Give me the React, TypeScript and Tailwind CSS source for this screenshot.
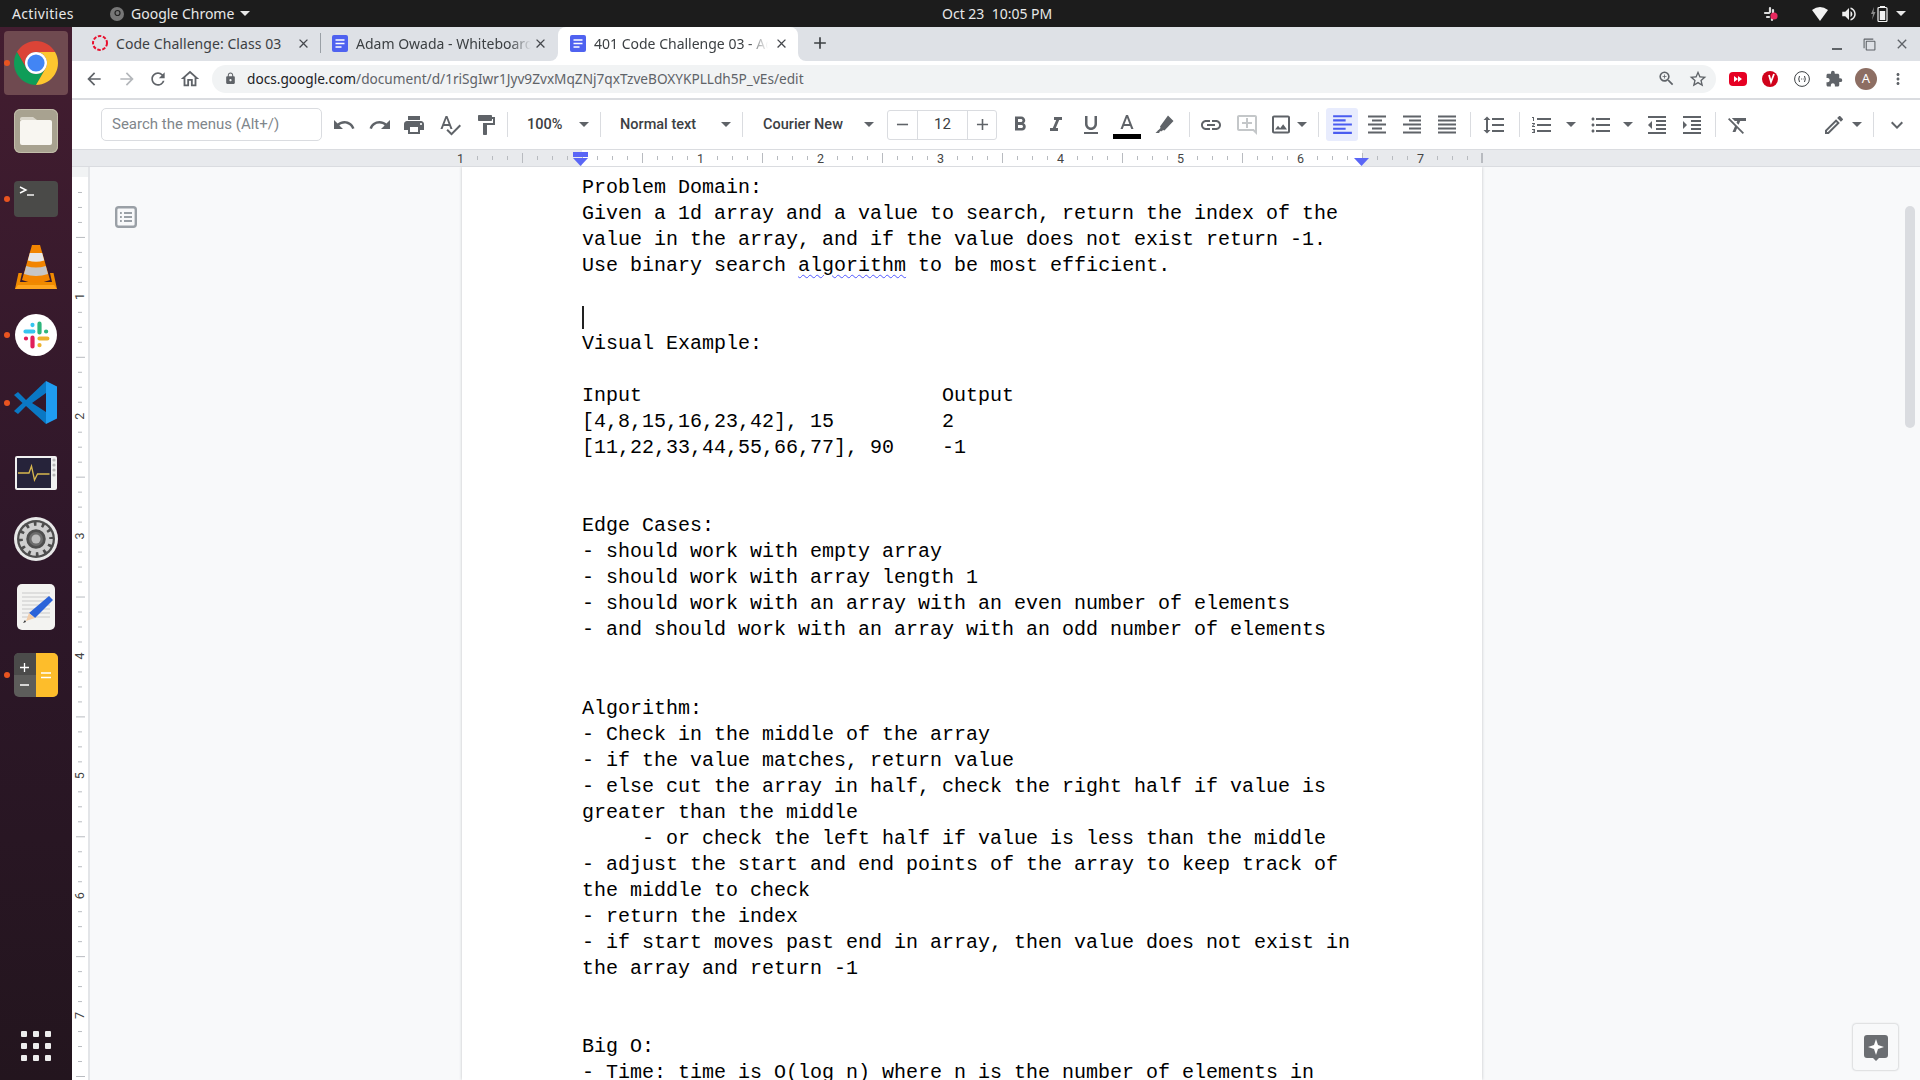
import React from "react";
import {
  MdUndo, MdRedo, MdPrint, MdSpellcheck, MdFormatPaint, MdFormatBold, MdFormatItalic, MdFormatUnderlined,
  MdLink, MdOutlineAddComment, MdOutlineImage, MdFormatAlignLeft, MdFormatAlignCenter, MdFormatAlignRight,
  MdFormatAlignJustify, MdFormatLineSpacing, MdFormatListNumbered, MdFormatListBulleted, MdFormatIndentDecrease,
  MdFormatIndentIncrease, MdFormatClear, MdOutlineEdit, MdExpandMore, MdArrowBack, MdArrowForward, MdRefresh,
  MdOutlineHome, MdLock, MdStarBorder, MdExtension, MdMoreVert, MdClose, MdAdd, MdRemove, MdZoomIn,
  MdVolumeUp, MdOutlineFilterNone,
} from "react-icons/md";

const mono = "font-['Liberation_Mono',monospace]";

function Ic({ icon: Icon, className = "", color = "text-[#5f6368]", size = 24 }: { icon: any; className?: string; color?: string; size?: number }) {
  return (
    <span className={`flex h-6 w-6 shrink-0 items-center justify-center ${color} ${className}`}>
      <Icon size={size} />
    </span>
  );
}
function Arrow({ className = "" }: { className?: string }) {
  return <span className={`h-0 w-0 shrink-0 border-x-[5px] border-t-[5px] border-x-transparent border-t-[#5f6368] ${className}`} />;
}
function Sep({ className = "" }: { className?: string }) {
  return <span className={`h-[25px] w-px shrink-0 bg-[#dadce0] ${className}`} />;
}

function DocFav({ className = "" }: { className?: string }) {
  return (
    <svg width="16" height="17" viewBox="0 0 16 17" className={`shrink-0 ${className}`}>
      <rect width="16" height="17" rx="2" fill="#4f62f0" />
      <path d="M3.500 5h9M3.500 8.500h9M3.500 12h6" stroke="#fff" strokeWidth="1.600" />
    </svg>
  );
}

function Chrome() {
  return (
    <svg width="44" height="44" viewBox="2 2 44 44">
      <path d="M4.950 13A22 22 0 0 1 43.050 13H24A11 11 0 0 0 14.470 29.500Z" fill="#db4437" />
      <path d="M24 46A22 22 0 0 1 4.950 13L14.470 29.500A11 11 0 0 0 33.530 29.500Z" fill="#0f9d58" />
      <path d="M43.050 13A22 22 0 0 1 24 46L33.530 29.500A11 11 0 0 0 24 13Z" fill="#fdc62f" />
      <circle cx="24" cy="24" r="11" fill="#fff" />
      <circle cx="24" cy="24" r="8.600" fill="#4285f4" />
    </svg>
  );
}
function Files() {
  return (
    <svg width="44" height="44" viewBox="0 0 44 44">
      <rect width="44" height="44" rx="6" fill="#a8a290" />
      <rect x="0.500" y="0.500" width="43" height="43" rx="6" fill="none" stroke="#c2bdaa" />
      <path d="M6 10a2 2 0 0 1 2-2h11l4 3H6Z" fill="#d9d5ca" />
      <rect x="6" y="11" width="32" height="25" rx="2" fill="#f8f6f1" />
    </svg>
  );
}
function Terminal() {
  return (
    <svg width="44" height="36" viewBox="0 0 44 36">
      <rect width="44" height="36" rx="4" fill="#4a4a48" />
      <path d="M6 6l6 3-6 3" fill="none" stroke="#fff" strokeWidth="1.400" />
      <path d="M13 14h7" stroke="#fff" strokeWidth="1.400" />
    </svg>
  );
}
function Vlc() {
  return (
    <svg width="42" height="46" viewBox="0 0 42 46">
      <path d="M7 29H3.500L0 45h42l-3.500-16H35l2 9H5Z" fill="#f08a00" />
      <path d="M0 45l3-4h36l3 4Z" fill="#ffa51f" />
      <path d="M17 1h8l10 35q-14 6-28 0Z" fill="#f28500" />
      <path d="M14.800 9h12.400l2 7.500q-8.200 2.500-16.400 0Z" fill="#e7e7e7" />
      <path d="M11.200 22q9.800 3 19.600 0l2.200 8q-12 4-24 0Z" fill="#c6c6c6" />
    </svg>
  );
}
function Slack() {
  return (
    <svg width="42" height="42" viewBox="0 0 48 48">
      <circle cx="24" cy="24" r="24" fill="#fff" />
      <g strokeWidth="4.800" strokeLinecap="round" fill="none">
        <path d="M12 20h9M20 12.500v.1" stroke="#36c5f0" />
        <path d="M28 11v10M35.500 20h.1" stroke="#2eb67d" />
        <path d="M28 28h9M28 35.500v.1" stroke="#ecb22e" />
        <path d="M20 27v10M12.500 28h.1" stroke="#e01e5a" />
      </g>
    </svg>
  );
}
function VsCode() {
  return (
    <svg width="44" height="44" viewBox="0 0 44 44">
      <path d="M32 0l11 5.500v32L32 43Z" fill="#1f9cf0" />
      <path d="M32 0L12 19 4 11 0 14l8.500 8L0 30l4 3 8-8 20 18V31L18 22 32 12Z" fill="#0a78c4" />
    </svg>
  );
}
function Monitor() {
  return (
    <svg width="42" height="34" viewBox="0 0 42 34">
      <rect width="42" height="34" rx="2" fill="#f0f0f0" />
      <rect x="2" y="2" width="34" height="30" fill="#26233a" />
      <path d="M3 17h11l2.500-7 3 14 3-6h12" fill="none" stroke="#d8b84e" strokeWidth="1.300" />
      <g fill="#b8b8b8"><circle cx="39" cy="4" r="1.600" /><circle cx="39" cy="9" r="1.600" /><circle cx="39" cy="14" r="1.600" /><circle cx="39" cy="19" r="1.600" /></g>
    </svg>
  );
}
function Gear() {
  return (
    <svg width="46" height="46" viewBox="0 0 46 46">
      <circle cx="23" cy="23" r="22" fill="#e8e8e8" />
      <circle cx="23" cy="23" r="19" fill="#4e4e4e" />
      <circle cx="23" cy="23" r="14.500" fill="none" stroke="#cfcfcf" strokeWidth="4.500" strokeDasharray="5 2.600" />
      <circle cx="23" cy="23" r="11.500" fill="none" stroke="#cfcfcf" strokeWidth="3.500" />
      <circle cx="23" cy="23" r="7" fill="#6d6d6d" />
      <circle cx="23" cy="23" r="4.500" fill="#bdbdbd" />
    </svg>
  );
}
function Editor() {
  return (
    <svg width="38" height="46" viewBox="0 0 38 46">
      <rect width="38" height="46" rx="5" fill="#f3f3f1" />
      <path d="M5 9h28M5 13h28M5 17h28M5 21h28M5 25h28M5 29h28M5 33h28" stroke="#c9c9c9" />
      <path d="M32 12l4 4-18 18-6-5Z" fill="#2b63d9" />
      <path d="M12 29l6 5-9 3Z" fill="#f2cda8" />
      <path d="M8 36l-2 3 3-1Z" fill="#333" />
    </svg>
  );
}
function Calc() {
  return (
    <svg width="44" height="44" viewBox="0 0 44 44">
      <rect width="44" height="44" rx="5" fill="#5d5d5b" />
      <path d="M5 0h17v22H0V5a5 5 0 0 1 5-5Z" fill="#4b4b4a" />
      <path d="M22 0h17a5 5 0 0 1 5 5v34a5 5 0 0 1-5 5H22Z" fill="#fdbd2b" />
      <path d="M6 14.500h9M10.500 10v9M6 32h9M27 20h10M27 24.500h10" stroke="#fff" strokeWidth="1.300" />
    </svg>
  );
}

function Dock() {
  const Dot = () => <span className="absolute left-[4px] top-1/2 h-[6px] w-[6px] -translate-y-1/2 rounded-full bg-[#e95420]" />;
  const slot = "relative flex h-[68px] w-[72px] items-center justify-center";
  return (
    <aside className="flex w-[72px] shrink-0 flex-col bg-gradient-to-b from-[#431d30] via-[#2e1729] to-[#23151e] pt-[2px]">
      <div className={slot}>
        <span className="flex h-16 w-16 items-center justify-center rounded-[4px] bg-[#6f4a50]"><Chrome /></span>
        <Dot />
      </div>
      <div className={slot}><Files /></div>
      <div className={slot}><Terminal /><Dot /></div>
      <div className={slot}><Vlc /></div>
      <div className={slot}><Slack /><Dot /></div>
      <div className={slot}><VsCode /><Dot /></div>
      <div className={`${slot} pt-[3px]`}><Monitor /></div>
      <div className={slot}><Gear /></div>
      <div className={slot}><Editor /></div>
      <div className={slot}><Calc /><Dot /></div>
      <div className="mt-auto mb-[19px] ml-[21px] grid w-[30px] grid-cols-3 gap-[6px]">
        {Array.from({ length: 9 }).map((_, i) => (
          <span key={i} className="h-[6px] w-[6px] rounded-[1px] bg-[#eeeeee]" />
        ))}
      </div>
    </aside>
  );
}

function TopBar() {
  return (
    <header className="flex h-[27px] shrink-0 items-center bg-[#1c1c1c] font-['Noto_Sans',sans-serif] text-[14px] text-[#e8e8e8]">
      <span className="ml-[12px] w-[62px] tracking-[0.35px]">Activities</span>
      <svg width="14" height="18" viewBox="0 0 14 18" className="ml-[36px]">
        <circle cx="7" cy="9" r="7" fill="#777" />
        <circle cx="7.500" cy="8" r="2.500" fill="none" stroke="#222" strokeWidth="1.200" />
      </svg>
      <span className="ml-[7px] w-[104px] whitespace-nowrap">Google Chrome</span>
      <span className="ml-[5px] h-0 w-0 border-x-[5px] border-t-[5px] border-x-transparent border-t-[#e8e8e8]" />
      <span className="ml-[692px] w-[110px] whitespace-nowrap text-[14px]">Oct 23&nbsp; 10:05 PM</span>
      <svg width="16" height="16" viewBox="0 0 16 16" className="ml-[711px]">
        <path d="M2 7h4M7 2v4M10 4v3M9 12v2M4 11h2" stroke="#ddd" strokeWidth="2.200" strokeLinecap="round" />
        <circle cx="11" cy="10" r="3.600" fill="#e8285e" />
      </svg>
      <svg width="16" height="14" viewBox="0 0 16 14" className="ml-[33px]"><path d="M0 3q8-6 16 0L8 14Z" fill="#f2f2f2" /></svg>
      <span className="ml-[9px] flex w-[24px] justify-center text-[#eee]"><MdVolumeUp size={18} /></span>
      <svg width="18" height="16" viewBox="0 0 18 16" className="ml-[9px]">
        <path d="M4 1L1 8h2l-1 6 3.500-8H3.500Z" fill="#8a8a8a" />
        <rect x="8" y="1.500" width="9" height="14" rx="1" fill="none" stroke="#f2f2f2" strokeWidth="1.200" />
        <rect x="10" y="0" width="5" height="2" fill="#f2f2f2" />
        <rect x="9.800" y="5" width="5.400" height="9" fill="#f2f2f2" />
      </svg>
      <span className="ml-[8px] h-0 w-0 border-x-[5px] border-t-[5px] border-x-transparent border-t-[#e8e8e8]" />
    </header>
  );
}

function TabBar() {
  const fade = "[mask-image:linear-gradient(90deg,#000_88%,transparent)]";
  const x = <MdClose size={15} className="shrink-0 text-[#45484d]" />;
  return (
    <div className="flex h-[34px] shrink-0 items-center bg-[#dee1e6] font-['Noto_Sans',sans-serif] text-[14px] text-[#3c4043]">
      <div className="flex h-full w-[248px] items-center pb-[2px] pl-[20px]">
        <svg width="16" height="16" viewBox="0 0 16 16" className="shrink-0"><circle cx="8" cy="8" r="7" fill="none" stroke="#e8102e" strokeWidth="2" strokeDasharray="3.500 1.600" /></svg>
        <span className="ml-[8px] w-[172px] whitespace-nowrap tracking-[0.06px]">Code Challenge: Class 03</span>
        <span className="ml-[8px]">{x}</span>
      </div>
      <span className="mb-[2px] h-[20px] w-px bg-[#9aa0a6]" />
      <div className="flex h-full w-[237px] items-center pb-[2px] pl-[11px]">
        <DocFav />
        <span className={`ml-[8px] w-[175px] overflow-hidden whitespace-nowrap ${fade}`}>Adam Owada - Whiteboard</span>
        <span className="ml-[2px]">{x}</span>
      </div>
      <div className="relative flex h-full w-[240px] items-center self-stretch rounded-t-[8px] bg-white pb-[2px] pl-[12px]">
        <span className="absolute -left-[8px] bottom-0 h-[8px] w-[8px] bg-white"><span className="block h-full w-full rounded-br-[8px] bg-[#dee1e6]" /></span>
        <span className="absolute -right-[8px] bottom-0 h-[8px] w-[8px] bg-white"><span className="block h-full w-full rounded-bl-[8px] bg-[#dee1e6]" /></span>
        <DocFav />
        <span className={`ml-[8px] w-[174px] overflow-hidden whitespace-nowrap ${fade}`}>401 Code Challenge 03 - Adam</span>
        <span className="ml-[6px]">{x}</span>
      </div>
      <MdAdd size={20} className="mb-[2px] ml-[12px] text-[#3c4043]" />
      <div className="ml-auto flex items-center text-[#5f6368]">
        <span className="mt-[9px] h-[2px] w-[10px] bg-[#5f6368]" />
        <MdOutlineFilterNone size={13} className="ml-[21px] -scale-y-100" />
        <MdClose size={16} className="ml-[18px] mr-[10px]" />
      </div>
    </div>
  );
}

function AddressBar() {
  return (
    <div className="flex h-[37px] shrink-0 items-center bg-white pb-[2px] font-['Noto_Sans',sans-serif]">
      <Ic icon={MdArrowBack} className="ml-[10px]" size={20} />
      <Ic icon={MdArrowForward} className="ml-[9px]" color="text-[#b4b7bb]" size={20} />
      <Ic icon={MdRefresh} className="ml-[7px]" size={20} />
      <Ic icon={MdOutlineHome} className="ml-[8px]" size={22} />
      <div className="ml-[10px] flex h-[28px] w-[1504px] items-center rounded-full bg-[#f1f3f4]">
        <MdLock size={13} className="ml-[12px] text-[#5f6368]" />
        <span className="ml-[10px] mt-[2px] w-[560px] whitespace-nowrap text-[13.650px] text-[#5f6368]">
          <span className="text-[#202124]">docs.google.com</span>/document/d/1riSgIwr1Jyv9ZvxMqZNj7qxTzveBOXYKPLLdh5P_vEs/edit
        </span>
        <span className="ml-auto flex items-center text-[#5f6368]">
          <MdZoomIn size={19} />
          <MdStarBorder size={20} className="ml-[12px] mr-[8px]" />
        </span>
      </div>
      <svg width="18" height="14" viewBox="0 0 18 14" className="ml-[13px]">
        <rect width="18" height="14" rx="4" fill="#e60023" />
        <path d="M5 4l4 3-4 3ZM9 4l4 3-4 3Z" fill="#fff" />
      </svg>
      <svg width="16" height="16" viewBox="0 0 16 16" className="ml-[15px]">
        <circle cx="8" cy="8" r="8" fill="#d0021b" />
        <path d="M7 4l2 7 3-8" fill="none" stroke="#fff" strokeWidth="1.800" />
      </svg>
      <svg width="16" height="16" viewBox="0 0 16 16" className="ml-[16px]">
        <circle cx="8" cy="8" r="7.400" fill="none" stroke="#3c4043" />
        <path d="M5.500 5q-1.500 3 0 6M10.500 5q1.500 3 0 6" fill="none" stroke="#3c4043" />
        <path d="M7 8h.8M8.800 8h.8" stroke="#3c4043" />
      </svg>
      <MdExtension size={18} className="ml-[15px] text-[#5f6368]" />
      <span className="ml-[12px] flex h-[22px] w-[22px] items-center justify-center rounded-full bg-[#8d6e63] text-[13px] text-white">A</span>
      <MdMoreVert size={18} className="ml-[12px] text-[#5f6368]" />
    </div>
  );
}

function Toolbar() {
  const label = "shrink-0 whitespace-nowrap font-['Roboto',sans-serif] text-[14.500px] font-medium text-[#3c4043]";
  const btn = "flex items-center justify-center text-[#5f6368]";
  return (
    <div className="flex h-[49px] shrink-0 items-center border-t-2 border-[#dadce0] bg-white box-content">
      <div className="ml-[29px] flex h-[33px] w-[221px] shrink-0 items-center rounded-[5px] border border-[#dadce0] pl-[10px] font-['Roboto',sans-serif] text-[15px] text-[#80868b]">
        Search the menus (Alt+/)
      </div>
      <Ic icon={MdUndo} className="ml-[10px]" />
      <Ic icon={MdRedo} className="ml-[12px]" />
      <Ic icon={MdPrint} className="ml-[10px]" />
      <Ic icon={MdSpellcheck} className="ml-[12px]" />
      <Ic icon={MdFormatPaint} className="ml-[12px]" />
      <Sep className="ml-[9px]" />
      <span className={`ml-[19px] w-[36px] ${label}`}>100%</span>
      <Arrow className="ml-[16px]" />
      <Sep className="ml-[11px]" />
      <span className={`ml-[19px] w-[80px] ${label}`}>Normal text</span>
      <Arrow className="ml-[21px]" />
      <Sep className="ml-[11px]" />
      <span className={`ml-[20px] w-[83px] ${label}`}>Courier New</span>
      <Arrow className="ml-[18px]" />
      <div className="ml-[13px] flex h-[30px] w-[110px] shrink-0 items-stretch rounded-[3px] border border-[#dadce0] font-['Roboto',sans-serif] text-[15px] text-[#3c4043]">
        <span className={`w-[29px] ${btn}`}><MdRemove size={19} /></span>
        <span className="flex w-[51px] items-center justify-center border-x border-[#dadce0]">12</span>
        <span className={`flex-1 ${btn}`}><MdAdd size={19} /></span>
      </div>
      <Ic icon={MdFormatBold} className="ml-[11px]" size={27} />
      <Ic icon={MdFormatItalic} className="ml-[12px]" size={26} />
      <Ic icon={MdFormatUnderlined} className="ml-[11px]" size={26} />
      <span className="relative ml-[12px] flex h-6 w-6 shrink-0 items-start justify-center text-[#5f6368]">
        <svg width="24" height="24" viewBox="0 0 24 24" className="-mt-[1px]"><path fill="currentColor" d="M11 3L5.500 17h2.250l1.120-3h6.250l1.120 3h2.250L13 3h-2zm-1.380 9L12 5.670 14.380 12H9.620z" /></svg>
        <span className="absolute -left-[2px] top-[21px] h-[5px] w-[28px] bg-black" />
      </span>
      <span className="ml-[13px] flex h-6 w-6 shrink-0 items-center justify-center text-[#5f6368]">
        <svg width="24" height="24" viewBox="0 0 24 24"><path fill="currentColor" d="M16 2.500l5.500 5.500-9 9.500-1.500-.5-1.200 1.200-4.300-.2.100-.1 2.900-2.900-.5-1.500Z" /><path fill="currentColor" d="M3.500 20l3-3 1.500 1.500-1 1.500Z" /></svg>
      </span>
      <Sep className="ml-[13px]" />
      <Ic icon={MdLink} className="ml-[9px]" size={26} />
      <Ic icon={MdOutlineAddComment} className="ml-[12px]" color="text-[#c4c7c9]" size={26} />
      <Ic icon={MdOutlineImage} className="ml-[10px]" size={27} />
      <Arrow className="ml-[4px]" />
      <Sep className="ml-[11px]" />
      <span className="ml-[7px] flex h-[33px] w-[32px] shrink-0 items-center justify-center rounded-[3px] bg-[#e8ecfd] text-[#4a5cf0]"><MdFormatAlignLeft size={25} /></span>
      <Ic icon={MdFormatAlignCenter} className="ml-[7px]" size={25} />
      <Ic icon={MdFormatAlignRight} className="ml-[11px]" size={25} />
      <Ic icon={MdFormatAlignJustify} className="ml-[11px]" size={25} />
      <Sep className="ml-[11px]" />
      <Ic icon={MdFormatLineSpacing} className="ml-[11px]" size={26} />
      <Sep className="ml-[13px]" />
      <Ic icon={MdFormatListNumbered} className="ml-[10px]" size={26} />
      <Arrow className="ml-[12px]" />
      <Ic icon={MdFormatListBulleted} className="ml-[13px]" size={26} />
      <Arrow className="ml-[10px]" />
      <Ic icon={MdFormatIndentDecrease} className="ml-[12px]" size={26} />
      <Ic icon={MdFormatIndentIncrease} className="ml-[11px]" size={26} />
      <Sep className="ml-[11px]" />
      <Ic icon={MdFormatClear} className="ml-[10px]" size={26} />
      <Ic icon={MdOutlineEdit} className="ml-[72px]" size={26} />
      <Arrow className="ml-[6px]" />
      <Sep className="ml-[11px]" />
      <Ic icon={MdExpandMore} className="ml-[11px]" size={30} />
    </div>
  );
}

function HRuler() {
  const ticks = Array.from({ length: 69 }, (_, k) => k);
  return (
    <div className="relative flex h-[18px] shrink-0 border-y border-[#dadce0] bg-[#e8eaed]">
      <div className="w-[510px]" />
      <div className="w-[780px] bg-white" />
      <svg width="1848" height="16" viewBox="72 150 1848 16" className="absolute left-0 top-0">
        {ticks.map((k) => {
          const x = 462.5 + k * 15;
          if (k % 8 === 0) {
            if (k === 68) return null;
            const n = k === 0 ? 1 : k / 8 - 1;
            if (k === 8) return <line key={k} x1={x} x2={x} y1={156} y2={160} stroke="#b8bbc0" />;
            return <text key={k} x={x - 2} y={162.5} textAnchor="middle" fontSize="12.5" fontFamily="Roboto, sans-serif" fill="#444">{n}</text>;
          }
          return <line key={k} x1={x} x2={x} y1={k % 4 === 0 ? 153 : 156} y2={k % 4 === 0 ? 163 : 160} stroke="#b8bbc0" />;
        })}
        <line x1="1481.5" x2="1481.5" y1="153" y2="163" stroke="#b8bbc0" />
        <rect x="573" y="152" width="15" height="5" fill="#5a66f6" />
        <path d="M573 158h15l-7.500 8ZM1354 158h15l-7.500 8Z" fill="#5a66f6" />
      </svg>
    </div>
  );
}

function VRuler() {
  const ticks = Array.from({ length: 62 }, (_, k) => k);
  return (
    <div className="flex w-[18px] shrink-0 flex-col border-r-2 border-[#e3e5e8] bg-white">
      <div className="h-[10px] shrink-0 bg-[#f1f3f4]" />
      <svg width="16" height="904" viewBox="72 176 16 904">
        {ticks.map((k) => {
          const y = 191.5 + k * 15;
          if (k % 8 === 7) return <text key={k} x={80} y={y - 1} textAnchor="middle" fontSize="12.5" fontFamily="Roboto, sans-serif" fill="#444" transform={`rotate(-90 80 ${y - 1}) translate(0 4)`}>{(k + 1) / 8}</text>;
          const long = k % 8 === 3;
          return <line key={k} x1={long ? 76 : 78} x2={long ? 85 : 82} y1={y} y2={y} stroke="#b8bbc0" />;
        })}
      </svg>
    </div>
  );
}

const LINES: string[] = [
  "Problem Domain:",
  "Given a 1d array and a value to search, return the index of the",
  "value in the array, and if the value does not exist return -1.",
  "SQUIGGLE",
  "",
  "CURSOR",
  "Visual Example:",
  "",
  "Input                         Output",
  "[4,8,15,16,23,42], 15         2",
  "[11,22,33,44,55,66,77], 90    -1",
  "",
  "",
  "Edge Cases:",
  "- should work with empty array",
  "- should work with array length 1",
  "- should work with an array with an even number of elements",
  "- and should work with an array with an odd number of elements",
  "",
  "",
  "Algorithm:",
  "- Check in the middle of the array",
  "- if the value matches, return value",
  "- else cut the array in half, check the right half if value is",
  "greater than the middle",
  "     - or check the left half if value is less than the middle",
  "- adjust the start and end points of the array to keep track of",
  "the middle to check",
  "- return the index",
  "- if start moves past end in array, then value does not exist in",
  "the array and return -1",
  "",
  "",
  "Big O:",
  "- Time: time is O(log n) where n is the number of elements in",
];

function Line({ text }: { text: string }) {
  if (text === "SQUIGGLE") {
    return (
      <div className="h-[26.05px]">
        Use binary search{" "}
        <span className="underline decoration-wavy decoration-[#4f57ff] decoration-1 underline-offset-[3px]">algorithm</span> to be most efficient.
      </div>
    );
  }
  if (text === "CURSOR") {
    return (
      <div className="flex h-[26.05px] items-center">
        <span className="h-[23px] w-[2px] bg-[#222]" />
      </div>
    );
  }
  return <div className="h-[26.05px]">{text}</div>;
}

function Canvas() {
  return (
    <div className="relative flex min-h-0 flex-1 overflow-hidden">
      <VRuler />
      <div className="flex min-w-0 flex-1 bg-[#f8f9fa]">
        <div className="w-[372px] shrink-0 pl-[25px] pt-[39px]">
          <svg width="22" height="22" viewBox="0 0 22 22">
            <rect x="1.200" y="1.200" width="19.600" height="19.600" rx="2.500" fill="none" stroke="#9aa0a6" strokeWidth="2.400" />
            <path d="M5 7h1.800M5 11h1.800M5 15h1.800M9 7h8M9 11h8M9 15h8" stroke="#9aa0a6" strokeWidth="2" />
          </svg>
        </div>
        <main className={`h-full w-[1020px] shrink-0 overflow-hidden bg-white pl-[120px] pt-[7.7px] shadow-[0_0_3px_rgba(60,64,67,0.28)] ${mono} whitespace-pre text-[20px] leading-[26.05px] text-black`}>
          {LINES.map((t, i) => (
            <Line key={i} text={t} />
          ))}
        </main>
      </div>
      <span className="absolute right-[5px] top-[39px] h-[222px] w-[10px] rounded-full bg-[#dadce0]" />
      <button className="absolute bottom-[10px] right-[22px] flex h-[46px] w-[45px] items-center justify-center rounded-[3px] bg-[#f8f9fa] pt-[2px] shadow-[0_0_2px_rgba(60,64,67,0.45)]">
        <svg width="24" height="26" viewBox="0 0 24 26">
          <path d="M3 0h18a3 3 0 0 1 3 3v17a3 3 0 0 1-3 3h-6l-3 3-3-3H3a3 3 0 0 1-3-3V3a3 3 0 0 1 3-3Z" fill="#6b6e72" />
          <path d="M12 4l2 6 6 2-6 2-2 6-2-6-6-2 6-2Z" fill="#fff" />
        </svg>
      </button>
    </div>
  );
}

export default function App() {
  return (
    <div className="flex h-screen w-screen flex-col overflow-hidden bg-white">
      <TopBar />
      <div className="flex min-h-0 flex-1">
        <Dock />
        <div className="flex min-w-0 flex-1 flex-col">
          <TabBar />
          <AddressBar />
          <Toolbar />
          <HRuler />
          <Canvas />
        </div>
      </div>
    </div>
  );
}
